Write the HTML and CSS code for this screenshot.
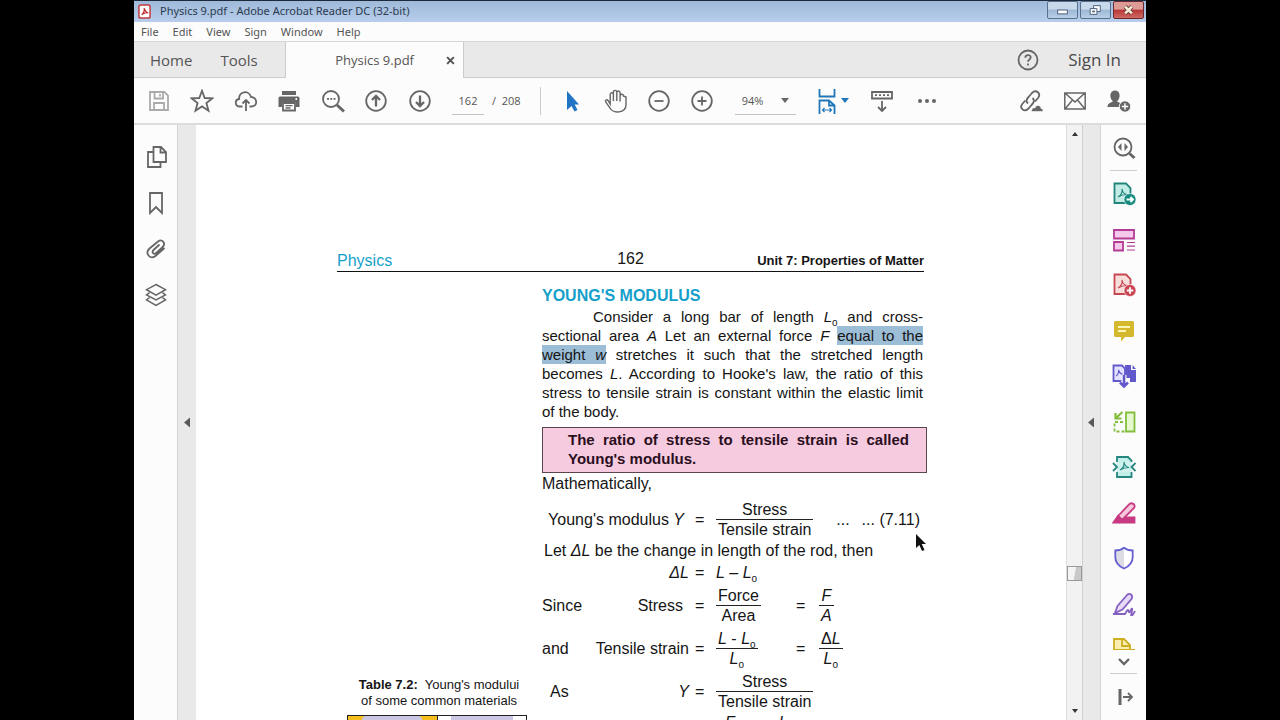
FILE: index.html
```html
<!DOCTYPE html>
<html lang="en">
<head>
<meta charset="utf-8">
<title>Physics 9.pdf - Adobe Acrobat Reader DC (32-bit)</title>
<link rel="stylesheet" href="styles.css">
</head>
<body>
<div class="app">
  <header class="titlebar">
    <svg class="app-icon" viewBox="0 0 14 16"><rect x="1" y="1" width="12" height="14" rx="2" fill="#fff" stroke="#c33a40" stroke-width="1.6"/><path d="M4 11.500C6 10 7 7 6.600 4.500C8 8 9 9.500 11 9.500C8 9 5.500 10 4 11.500Z" fill="none" stroke="#c3262d" stroke-width="1.300"/></svg>
    <span class="title">Physics 9.pdf - Adobe Acrobat Reader DC (32-bit)</span>
    <div class="win-buttons">
      <button class="win" aria-label="Minimize"><svg viewBox="0 0 30 16"><rect x="10" y="8" width="10" height="4" fill="#fff" stroke="#4c5f7c"/></svg></button>
      <button class="win" aria-label="Restore"><svg viewBox="0 0 30 16"><path d="M13 3.500h7v6h-7z" fill="#fff" stroke="#4c5f7c"/><path d="M9.500 6.500h7v6h-7z" fill="#fff" stroke="#4c5f7c"/><path d="M12 9h2v1h-2z" fill="none" stroke="#4c5f7c"/></svg></button>
      <button class="win close" aria-label="Close"><svg viewBox="0 0 30 16"><path d="M11.500 4.500l7 7M18.500 4.500l-7 7" stroke="#6b3a3c" stroke-width="4.400"/><path d="M11.500 4.500l7 7M18.500 4.500l-7 7" stroke="#f6efd9" stroke-width="2.600"/></svg></button>
    </div>
  </header>
  <nav class="menubar" aria-label="Menu">
    <button>File</button><button>Edit</button><button>View</button><button>Sign</button><button>Window</button><button>Help</button>
  </nav>
  <div class="tabs">
    <div class="fixed-tabs"><button>Home</button><button>Tools</button></div>
    <div class="doc-tab"><span>Physics 9.pdf</span><button aria-label="Close tab"><svg viewBox="0 0 8 8"><path d="M1 1l6 6M7 1l-6 6" stroke="#555" stroke-width="1.800"/></svg></button></div>
    <div class="tabs-right">
      <button class="help" aria-label="Help"><svg class="icon" viewBox="0 0 24 24"><circle cx="12" cy="12" r="9.500"/><path d="M9.300 9.800c0-3.600 5.400-3.600 5.400-.3c0 1.900-2.700 2.100-2.700 4.300M12 15.500v2"/></svg></button>
      <button class="signin">Sign In</button>
    </div>
  </div>
  <div class="toolbar">
    <div class="group files">
      <button aria-label="Save" disabled><svg class="icon faint" viewBox="0 0 24 24"><path d="M3 3h14.500l3.500 3.500V21H3zM7.500 3v6.500h8.500V3M13 5v2.500M7 21v-7h10v7"/></svg></button>
      <button aria-label="Star"><svg class="icon" viewBox="0 0 24 24"><path d="M12 1.800l2.700 7.200 7.800.3-6.100 4.800 2.100 7.600-6.500-4.300-6.500 4.300 2.100-7.600L1.500 9.300 9.300 9z"/></svg></button>
      <button aria-label="Upload"><svg class="icon" viewBox="0 0 24 24"><path d="M8.500 17.500H6c-5.500 0-5.500-7-.8-7.500C4.500 2 15 .8 17 8c6.500 0 7 9.500.8 9.500h-2.300M12 22V11M8.500 14.500L12 11l3.500 3.500"/></svg></button>
      <button aria-label="Print"><svg class="icon" viewBox="0 0 24 24"><path d="M5 2h14v4H5z" fill="#666" stroke="none"/><path d="M3 7.500h18q1.500 0 1.500 1.500v9H19v-5H5v5H1.500V9q0-1.500 1.500-1.500z" fill="#666" stroke="none"/><path d="M6 14h12v7.500H6z" fill="#fff"/><path d="M8.500 16.700h7M8.500 19h5" stroke-width="1.300"/><path d="M18.500 10h1.500" stroke="#fff"/></svg></button>
      <button aria-label="Find"><svg class="icon" viewBox="0 0 24 24"><circle cx="10" cy="10" r="8"/><path d="M16 16l7 6.500" stroke-width="3"/><path d="M6 9.800h2M9.200 9.800h2M12.500 9.800h2"/></svg></button>
      <button aria-label="Previous page"><svg class="icon" viewBox="0 0 24 24"><circle cx="12" cy="12" r="9.800"/><path d="M12 17.500V7M8 11l4-4 4 4" stroke-width="2.300"/></svg></button>
      <button aria-label="Next page"><svg class="icon" viewBox="0 0 24 24"><circle cx="12" cy="12" r="9.800"/><path d="M12 6.500V17M8 13l4 4 4-4" stroke-width="2.300"/></svg></button>
    </div>
    <label class="page-no"><input type="text" value="162" aria-label="Page number"><span>/&nbsp; 208</span></label>
    <div class="group view">
      <button aria-label="Select"><svg class="icon" viewBox="0 0 24 24"><path d="M6 2v19l4.500-4 3 5.500 3-1.500-2.800-5.500H18z" fill="#2173c4" stroke="none"/></svg></button>
      <button aria-label="Pan"><svg class="icon thin" viewBox="0 0 24 24"><path d="M6.200 15V5.500c0-2.400 3.200-2.400 3.200 0V12 3.200c0-2.500 3.400-2.500 3.400 0V12 3.800c0-2.400 3.300-2.400 3.300 0V12.500 7c0-2.300 3.300-2.300 3.300 0L22 8v7.500c0 9.500-13.500 9-16 3.500L1.700 13c-1-2 1.200-2.800 2.300-1.500z" stroke-width="1.400"/></svg></button>
      <button aria-label="Zoom out"><svg class="icon" viewBox="0 0 24 24"><circle cx="12" cy="12" r="9.800"/><path d="M7.500 12h9"/></svg></button>
      <button aria-label="Zoom in"><svg class="icon" viewBox="0 0 24 24"><circle cx="12" cy="12" r="9.800"/><path d="M7.500 12h9M12 7.500v9"/></svg></button>
    </div>
    <div class="zoom"><select aria-label="Zoom level"><option>94%</option></select><svg viewBox="0 0 8 5"><path d="M0 0h8L4 5z" fill="#666"/></svg></div>
    <div class="group display">
      <button class="fit" aria-label="Fit width"><svg class="icon" viewBox="0 0 18 26"><g stroke="#2176b8"><path d="M1.500 1v7.500h15V1M1.500 26V12.500h9.500l5.500 5V26M11 12.500v5h5.500"/><path d="M4.500 22h9M6.500 20l-2 2 2 2M11.500 20l2 2-2 2" stroke-width="1.200"/></g></svg><svg class="caret" viewBox="0 0 8 5"><path d="M0 0h8L4 5z" fill="#2176b8"/></svg></button>
      <button class="scroll" aria-label="Scroll mode"><svg class="icon" viewBox="0 0 24 24"><path d="M2 3h20v6.500H2zM12 12v10M8 18l4 4 4-4"/><path d="M5 6.200h2M9 6.200h2M13 6.200h2M17 6.200h2"/></svg></button>
      <button class="more" aria-label="More"><svg class="icon" viewBox="0 0 24 24"><g fill="#666" stroke="none"><circle cx="5" cy="12" r="2"/><circle cx="12" cy="12" r="2"/><circle cx="19" cy="12" r="2"/></g></svg></button>
    </div>
    <div class="group share">
      <button aria-label="Share link"><svg class="icon" viewBox="0 0 24 24"><path d="M9 14.500c-3-2.500-.5-5.500 1-7l3-3.500c4-4 9.500.5 6 5l-3 3.500M13.500 9c3 2.500.5 5.500-1 7L9 20c-3.800 3.500-9-1-5.700-5l3-3.500"/><path d="M12.500 22.500c0-3.500 2.500-4 3.500-3.500 1-4 6-3 6 .5 2.500 0 2.500 3 1 3z" fill="#666" stroke="#fcfcfc" stroke-width=".6"/></svg></button>
      <button aria-label="Email"><svg class="icon thin" viewBox="0 0 24 24"><path d="M1.800 4h20.400v16H1.800zM2 4l10 9 10-9M2 20l7.500-9M22 20l-7.500-9"/></svg></button>
      <button aria-label="Add person"><svg class="icon" viewBox="0 0 24 24"><path d="M.5 18c0-4 3.500-4.500 5.500-5.500-4-3.500-3.500-11 2-11s6 7.500 2 11c1.500.8 3 1 4 2.500L12 18z" fill="#666" stroke="none"/><circle cx="18" cy="17.500" r="5.700" fill="#666" stroke="#fcfcfc" stroke-width="1"/><path d="M18 14.300v6.400M14.800 17.500h6.400" stroke="#fff" stroke-width="1.400"/></svg></button>
    </div>
  </div>
  <main class="workspace">
    <nav class="left-rail" aria-label="Navigation panes">
      <button aria-label="Thumbnails"><svg class="icon" viewBox="0 0 24 24"><path d="M9.500 2h7.500l5 5v10H9.500zM16.500 2v5.500H22M9.500 7H4v15h12.500v-5"/></svg></button>
      <button aria-label="Bookmarks"><svg class="icon" viewBox="0 0 24 24"><path d="M6 2h12v20l-6-6-6 6z"/></svg></button>
      <button aria-label="Attachments"><svg class="icon" viewBox="0 0 24 24"><path d="M15.500 7.500l-6 5.500c-2.500 2.500.5 5 2.700 3l6-5.500c4.500-4-.2-9-4.200-6L5.500 11.500c-5 4.500.5 11.500 6 7.500L20.500 11"/></svg></button>
      <button aria-label="Layers"><svg class="icon" viewBox="0 0 24 24"><path d="M12 1.500l9.500 5.200-9.500 5.500-9.500-5.500zM5.500 9.700L2.500 12l9.500 5 9.500-5-3-2.300M5.500 14.700L2.500 17l9.500 5.300 9.500-5.300-3-2.300" stroke-width="1.500"/></svg></button>
    </nav>
    <button class="splitter" aria-label="Toggle navigation"><svg viewBox="0 0 6 10"><path d="M6 0v10L0 5z" fill="#5a5a5a"/></svg></button>
    <section class="viewer">
      <article class="page">
        <header class="page-head"><span class="subject">Physics</span><span class="folio">162</span><span class="unit">Unit 7: Properties of Matter</span></header>
        <div class="columns">
          <aside class="side">
            <p><b>Table 7.2:</b>&nbsp; Young's modului<br>of some common materials</p>
            <table><tr><td class="gold"><div></div></td><td class="plain"><div></div></td></tr></table>
          </aside>
          <div class="text">
            <h2>YOUNG'S MODULUS</h2>
            <p class="body">
              <span class="line indent">Consider a long bar of length <i>L</i><sub>o</sub> and cross-</span>
              <span class="line">sectional area <i>A</i> Let an external force <i>F</i> <mark>equal to the</mark></span>
              <span class="line"><mark>weight <i>w</i></mark> stretches it such that the stretched length</span>
              <span class="line">becomes <i>L</i>. According to Hooke's law, the ratio of this</span>
              <span class="line">stress to tensile strain is constant within the elastic limit</span>
              <span class="line last">of the body.</span>
            </p>
            <div class="callout"><span class="line">The ratio of stress to tensile strain is called</span><span class="line last">Young's modulus.</span></div>
            <div class="math">
            <p>Mathematically,</p>
            <div class="eq def">
              <span class="lhs wide">Young's modulus <i>Y</i></span><span class="is">=</span>
              <span class="frac"><span>Stress</span><span>Tensile strain</span></span>
              <span class="ref"><span>...</span><span>... (7.11)</span></span>
            </div>
            <p class="let">Let <i>ΔL</i> be the change in length of the rod, then</p>
            <div class="eq short"><span></span><i class="lhs">ΔL</i><span class="is">=</span><span class="diff"><i>L</i> – <i>L</i><sub>o</sub></span></div>
            <div class="eq"><span>Since</span><span class="lhs gap">Stress</span><span class="is">=</span><span class="frac"><span>Force</span><span>Area</span></span><span class="is2">=</span><span class="frac"><i>F</i><i>A</i></span></div>
            <div class="eq"><span>and</span><span class="lhs">Tensile strain</span><span class="is">=</span><span class="frac"><span><i>L</i> - <i>L</i><sub>o</sub></span><span><i>L</i><sub>o</sub></span></span><span class="is2">=</span><span class="frac"><span>Δ<i>L</i></span><span><i>L</i><sub>o</sub></span></span></div>
            <div class="eq"><span class="as">As</span><i class="lhs">Y</i><span class="is">=</span><span class="frac"><span>Stress</span><span>Tensile strain</span></span></div>
            <div class="eq last-eq"><span></span><span></span><span></span><span class="product"><i>F</i><i>L</i></span></div>
            </div>
          </div>
        </div>
      </article>
      <svg class="pointer" viewBox="0 0 12 18"><path d="M1 0v14l3.300-3 2.700 6 2.500-1-2.700-6H11z" fill="#111"/></svg>
    </section>
    <div class="scrollbar" aria-hidden="true">
      <svg viewBox="0 0 6 4"><path d="M0 4h6L3 0z" fill="#333"/></svg>
      <div class="thumb"></div>
      <svg viewBox="0 0 6 4"><path d="M0 0h6L3 4z" fill="#333"/></svg>
    </div>
    <button class="splitter tools-split" aria-label="Toggle tools"><svg viewBox="0 0 6 10"><path d="M6 0v10L0 5z" fill="#5a5a5a"/></svg></button>
    <nav class="right-rail" aria-label="Tools">
      <button class="find" aria-label="Search tools"><svg class="icon" viewBox="0 0 24 24"><circle cx="11" cy="11" r="8.500"/><path d="M17.500 17.500l5 4.500" stroke-width="3"/><path d="M9.500 7v8L6 11zM12.500 7v8l3.500-4z" fill="#666" stroke="none"/></svg></button>
      <div class="tool-list">
        <button aria-label="Export PDF"><svg class="icon" viewBox="0 0 24 24"><path d="M2.500 1.500H14l4.500 4.500v15h-16z" fill="#c3ece6" stroke="#22857c"/><path d="M6 15c4-2 4.500-6 4-8 .5 3 2 5 5 5.500-3 0-6 .5-9 2.500" stroke="#22857c" stroke-width="1.200"/><circle cx="18" cy="17.500" r="6" fill="#178a80" stroke="#fff" stroke-width=".6"/><path d="M14.500 17.500h6M18.500 15l2.500 2.500-2.500 2.500" stroke="#fff"/></svg></button>
        <button aria-label="Organize pages"><svg class="icon" viewBox="0 0 24 24"><g stroke="#b43c96"><path d="M2 2h20v8.500H2zM2 14h9v8.500H2z" fill="#f5c9e9"/><path d="M15 14.500h8M15 18.200h8M15 22h8" stroke-width="1.200"/></g></svg></button>
        <button aria-label="Create PDF"><svg class="icon" viewBox="0 0 24 24"><path d="M2.500 1.500H14l4.500 4.500v15h-16z" fill="#f8dedb" stroke="#c64753"/><path d="M6 15c4-2 4.500-6 4-8 .5 3 2 5 5 5.500-3 0-6 .5-9 2.500" stroke="#c64753" stroke-width="1.200"/><circle cx="18" cy="17.500" r="6" fill="#cb4453" stroke="#fff" stroke-width=".6"/><path d="M14.800 17.500h6.400M18 14.300v6.400" stroke="#fff"/></svg></button>
        <button aria-label="Comment"><svg class="icon" viewBox="0 0 24 24"><path d="M3.500 2h17q1.500 0 1.500 1.500v13q0 1.500-1.500 1.500H13l-4 4.500V18H3.500Q2 18 2 16.500v-13Q2 2 3.500 2z" fill="#d4b92f" stroke="none"/><path d="M6 8h12M6 12h8" stroke="#fff7b5"/></svg></button>
        <button aria-label="Combine files"><svg class="icon" viewBox="0 0 24 24"><path d="M1.500 1.500h8.500l3 3V17H1.500z" fill="#e2e1ff" stroke="#6159cb"/><path d="M13 1h6v5h5v12h-6v-4h-4.500zM20.500 1l3.500 4h-3.500z" fill="#6159cb" stroke="none"/><path d="M4 12c2-1 3-4 2.500-6 1 3 2 4 4 4" stroke="#6159cb" stroke-width="1.200"/><path d="M12 11v11M8 18.500l4 4 4-4" stroke="#fafafa" stroke-width="5"/><path d="M12 11v11M8 18.500l4 4 4-4" stroke="#6159cb" stroke-width="2.600"/></svg></button>
        <button aria-label="Crop pages"><svg class="icon" viewBox="0 0 24 24"><g stroke="#82bd3c"><path d="M14 2.500h8.500v19H14z" fill="#e5f8ce"/><path d="M11 12H2.500v9.500H13" stroke-dasharray="3 2"/><path d="M10.500 2L4 8M3.500 3v5.500H9.500" stroke-width="2.200"/></g></svg></button>
        <button aria-label="Compress PDF"><svg class="icon" viewBox="0 0 24 24"><g stroke="#24867e"><path d="M5 7V2h11l3.500 3.500V7M5 17v5h14.500v-5" fill="#c4eee9"/><path d="M4.500 7h15v10h-15z" fill="#d0f2ee" stroke="none"/><path d="M1 8l4 4-4 4M23.500 8l-4 4 4 4"/><path d="M8 15c4-2 4.500-5 4-8 .5 3 2 5 5 5.500-3 0-6 .5-9 2.500" stroke-width="1.200"/></g></svg></button>
        <button aria-label="Redact"><svg class="icon" viewBox="0 0 24 24"><g stroke="#c83a82"><path d="M14 16.500h8.500v5H9z" fill="#c83a82"/><path d="M6 15L17.500 3q2-1.500 4 0t.5 4L10 19z" fill="#f5c6dc"/><path d="M6 15l4 4-3 2.500H1.500z" fill="#c83a82"/></g></svg></button>
        <button aria-label="Protect"><svg class="icon" viewBox="0 0 24 24"><path d="M12 1.800c2.500 2 5.500 2.700 8.700 2.700V11c0 6.500-4 9.500-8.700 11.500C7.300 20.500 3.300 17.500 3.300 11V4.500c3.200 0 6.200-.7 8.700-2.700z" fill="#fff" stroke="none"/><path d="M12 1.800v20.700C7.300 20.500 3.300 17.500 3.300 11V4.500c3.200 0 6.200-.7 8.700-2.700z" fill="#dcdce5" stroke="none"/><path d="M12 1.800c2.500 2 5.500 2.700 8.700 2.700V11c0 6.500-4 9.500-8.700 11.500C7.300 20.500 3.300 17.500 3.300 11V4.500c3.200 0 6.200-.7 8.700-2.700z" stroke="#6560d0"/></svg></button>
        <button aria-label="Fill and sign"><svg class="icon" viewBox="0 0 24 24"><g stroke="#8560c3"><path d="M5.500 14L15 3q2-2 4-.5t.5 4.500L10.500 17.500 3 21z" fill="#e6daf7"/><path d="M1 22h12q3-6 3.500-3t2.500-1 .5 3 3.500-2"/></g></svg></button>
        <button aria-label="More tools"><svg class="icon" viewBox="0 0 24 24"><g stroke="#cdae20"><path d="M2 20V2h10l6 6v5H2" fill="#fbeeb0"/><path d="M10 2v7h8M2 13h21" /></g></svg></button>
      </div>
      <button class="expand" aria-label="Show more"><svg class="icon" viewBox="0 0 24 24"><path d="M7 9l5 5 5-5" stroke-width="2.300"/></svg></button>
      <button class="collapse" aria-label="Collapse pane"><svg class="icon" viewBox="0 0 24 24"><path d="M8 4v16" stroke-width="3"/><path d="M11 12h9M16 8l4 4-4 4"/></svg></button>
    </nav>
  </main>
</div>
</body>
</html>
```
FILE: styles.css
```css
* { box-sizing: border-box; }
body { margin: 0; background: #000; font-family: "Open Sans", "Noto Sans", sans-serif; color: #555; }
button { border: 0; padding: 0; background: none; font: inherit; color: inherit; display: flex; align-items: center; justify-content: center; flex: none; }
p, h2 { margin: 0; }
.app { margin: 0 134px; height: 100vh; display: flex; flex-direction: column; background: #fcfcfc; overflow: hidden; }
.icon { width: 24px; height: 24px; fill: none; stroke: #666; stroke-width: 1.8; flex: none; }
.icon.faint { stroke: #aaa; }
.icon.thin { stroke-width: 1.5; }

.titlebar { height: 22px; flex: none; display: flex; align-items: center; gap: 9px; padding-left: 4px; background: linear-gradient(#9fb9d9, #adc6e3 60%, #b9cdec); border-top: 1px solid #1c2a3c; color: #2c3a50; font-family: "Noto Sans", sans-serif; font-size: 11px; }
.app-icon { width: 13px; height: 15px; }
.title { padding-bottom: 2px; }
.win-buttons { margin-left: auto; display: flex; gap: 2px; padding-right: 2px; align-self: flex-start; }
.win { width: 31px; height: 18px; border: 1px solid #56708f; border-radius: 2px; background: linear-gradient(#c8d9ec 45%, #9cb6d3 50%, #b9d0e8); }
.win svg { width: 30px; height: 16px; }
.close { border-color: #6e2930; background: linear-gradient(#dd9b95 45%, #b93639 50%, #cf6a62); }

.menubar { height: 20px; flex: none; display: flex; gap: 14px; padding-left: 7px; border-bottom: 1px solid #d6d6d6; font-family: "Noto Sans", sans-serif; font-size: 11px; }
.tabs { height: 36px; flex: none; display: flex; background: #e9e9e9; font-size: 15px; }
.fixed-tabs { width: 152px; display: flex; gap: 28px; padding-left: 16px; border-bottom: 1px solid #ccc; border-right: 1px solid #ccc; }
.doc-tab { width: 177px; display: flex; align-items: center; justify-content: flex-end; gap: 32px; padding-right: 8px; background: #fcfcfc; font-size: 13px; }
.doc-tab svg { width: 9px; height: 9px; }
.tabs-right { flex: 1; display: flex; justify-content: flex-end; gap: 28px; padding-right: 25px; border-left: 1px solid #ccc; border-bottom: 1px solid #ccc; }
.signin { color: #4a4a4a; font-size: 17px; }

.toolbar { height: 47px; flex: none; display: flex; align-items: center; border-bottom: 2px solid #dcdcdc; font-size: 12px; }
.group { display: flex; }
.files { padding-left: 3px; }
.files button { width: 43px; }
.files button:nth-child(even) { width: 44px; }
.page-no { display: flex; align-items: center; gap: 8px; padding: 0 19px 0 11px; border-right: 1px solid #ccc; height: 28px; flex: none; font-size: 11px; }
.page-no input { width: 32px; height: 28px; border: 0; border-bottom: 1px solid #c4c4c4; padding: 0; background: none; font: inherit; color: inherit; text-align: center; }
.view { padding-left: 11px; }
.view button { width: 43px; }
.zoom { display: flex; align-items: center; margin-left: 11px; width: 61px; height: 28px; border-bottom: 1px solid #c4c4c4; padding: 0 7px; flex: none; }
.zoom select { appearance: none; border: 0; padding: 0; background: none; font: inherit; font-size: 11px; color: inherit; flex: 1; }
.zoom svg { width: 8px; height: 5px; }
.display { margin-left: 22px; gap: 21px; }
.fit { gap: 5px; }
.fit .icon { width: 18px; height: 26px; }
.caret { width: 8px; height: 5px; }
.share { margin-left: auto; padding-right: 5px; }
.share button { width: 44px; }

.workspace { flex: 1; min-height: 0; display: flex; }
.left-rail { width: 44px; flex: none; padding-top: 9px; border-right: 1px solid #d2d2d2; }
.left-rail button { width: 43px; height: 46px; }
.splitter { width: 18px; background: #e9e9e9; align-self: stretch; }
.splitter svg { width: 6px; height: 11px; }
.viewer { flex: 1; min-width: 0; position: relative; overflow: hidden; background: #fff; }
.pointer { position: absolute; left: 719px; top: 409px; width: 12px; height: 18px; }
.scrollbar { width: 16px; flex: none; display: flex; flex-direction: column; align-items: center; background: #f2f2f2; border-left: 1px solid #ddd; padding: 7px 0; }
.scrollbar svg { width: 6px; height: 4px; }
.thumb { width: 15px; height: 15px; margin-top: 430px; margin-bottom: auto; border: 1px solid #999; background: linear-gradient(100deg, #f4f4f4 50%, #c9c9c9 55%); }
.tools-split { border-left: 1px solid #d0d0d0; border-right: 1px solid #d4d4d4; width: 19px; padding-right: 2px; }
.right-rail { width: 45px; flex: none; display: flex; flex-direction: column; align-items: center; }
.find { width: 27px; height: 46px; border-bottom: 1px solid #ccc; }
.tool-list { flex: 1; min-height: 0; overflow: hidden; }
.tool-list button { width: 27px; height: 46px; }
.tool-list button:nth-child(even) { height: 45px; }
.expand { width: 27px; height: 24px; border-bottom: 1px solid #ccc; }
.collapse { width: 27px; height: 46px; }

.page { width: 731px; padding: 124px 0 0 141px; font-family: "Liberation Sans", Arial, sans-serif; font-size: 15px; line-height: 19px; color: #151515; }
.page-head { display: grid; grid-template-columns: 1fr auto 1fr; width: 587px; height: 23px; border-bottom: 1px solid #111; font-size: 16px; line-height: 19px; }
.subject { color: #159fca; padding-top: 2px; }
.unit { text-align: right; font-size: 13px; font-weight: bold; padding-top: 2px; }
.columns { display: flex; gap: 15px; }
.side { width: 190px; flex: none; padding-top: 405px; font-size: 13px; line-height: 16px; text-align: center; }
.side p { padding-left: 14px; }
.side table { width: 180px; margin: 6px 0 0 10px; border-collapse: collapse; border: 1px solid #222; }
.side td { width: 50%; height: 40px; padding: 0; border: 1px solid #222; }
.gold { background: #f6be1c; }
.gold div { width: 60px; height: 40px; margin: 0 auto; background: #cbc6e2; border-radius: 4px 4px 0 0; }
.plain div { width: 62px; height: 40px; margin: 0 auto; background: #cbc8e6; }
.text { width: 385px; flex: none; padding-top: 14px; }
.text h2 { font-size: 16px; line-height: 19px; color: #159fca; }
.body { width: 381px; padding-top: 2px; }
.line { display: block; white-space: nowrap; text-align: justify; text-align-last: justify; height: 19px; }
.indent { padding-left: 51px; }
.last { text-align-last: left; }
sub { font-size: 10px; line-height: 0; vertical-align: -4px; }
mark { background: #9cbdd6; color: inherit; padding: 1px 0; }
.callout { margin: 6px 0 1px; padding: 2px 17px 4px 25px; border: 1px solid #5c4450; background: #f7cbdf; font-weight: bold; color: #2a0f1e; }
.math { font-size: 16px; }
.eq { display: grid; grid-template-columns: 46px 102px 26px 80px 23px auto; height: 43px; align-items: center; }
.short { height: 24px; }
.def { display: flex; height: 48px; padding-top: 4px; }
.wide { width: 148px; }
.lhs { text-align: right; padding-right: 1px; white-space: nowrap; }
.lhs.wide { padding-right: 6px; }
.lhs.gap { padding-right: 7px; }
.is { width: 26px; padding-left: 5px; }
.frac { display: flex; flex-direction: column; text-align: center; justify-self: start; }
.frac > * { padding: 0 2px; white-space: nowrap; }
.frac > :last-child { border-top: 1px solid #222; }
.ref { margin-left: auto; padding-right: 7px; display: flex; gap: 12px; }
.let { padding-left: 2px; }
.as { padding-left: 8px; }
.product { display: flex; gap: 44px; padding-left: 9px; }
.last-eq { align-items: start; }
```
